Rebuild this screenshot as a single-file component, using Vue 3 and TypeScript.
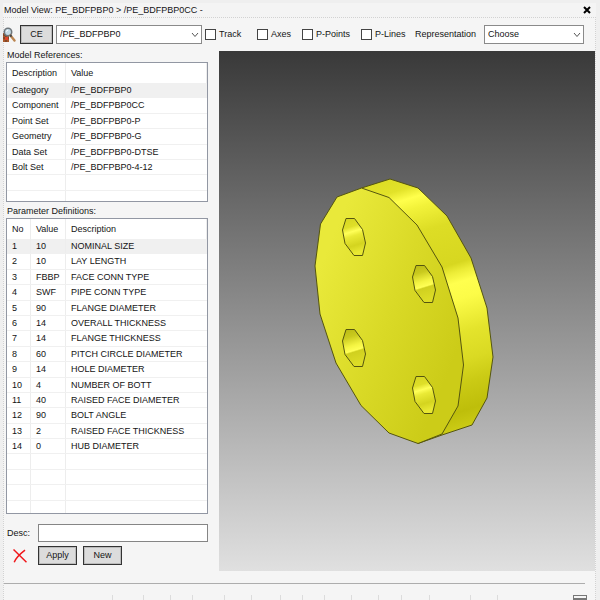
<script setup lang="ts">
import { ref } from 'vue'

interface Reference {
  description: string
  value: string
}

interface Parameter {
  no: string
  value: string
  description: string
}

const references: Reference[] = [
  { description: 'Category', value: '/PE_BDFPBP0' },
  { description: 'Component', value: '/PE_BDFPBP0CC' },
  { description: 'Point Set', value: '/PE_BDFPBP0-P' },
  { description: 'Geometry', value: '/PE_BDFPBP0-G' },
  { description: 'Data Set', value: '/PE_BDFPBP0-DTSE' },
  { description: 'Bolt Set', value: '/PE_BDFPBP0-4-12' },
  { description: '', value: '' },
  { description: '', value: '' },
]

const parameters: Parameter[] = [
  { no: '1', value: '10', description: 'NOMINAL SIZE' },
  { no: '2', value: '10', description: 'LAY LENGTH' },
  { no: '3', value: 'FBBP', description: 'FACE CONN TYPE' },
  { no: '4', value: 'SWF', description: 'PIPE CONN TYPE' },
  { no: '5', value: '90', description: 'FLANGE DIAMETER' },
  { no: '6', value: '14', description: 'OVERALL THICKNESS' },
  { no: '7', value: '14', description: 'FLANGE THICKNESS' },
  { no: '8', value: '60', description: 'PITCH CIRCLE DIAMETER' },
  { no: '9', value: '14', description: 'HOLE DIAMETER' },
  { no: '10', value: '4', description: 'NUMBER OF BOTT' },
  { no: '11', value: '40', description: 'RAISED FACE DIAMETER' },
  { no: '12', value: '90', description: 'BOLT ANGLE' },
  { no: '13', value: '2', description: 'RAISED FACE THICKNESS' },
  { no: '14', value: '0', description: 'HUB DIAMETER' },
  { no: '', value: '', description: '' },
  { no: '', value: '', description: '' },
  { no: '', value: '', description: '' },
  { no: '', value: '', description: '' },
]

const toggles = ref([
  { label: 'Track', on: false },
  { label: 'Axes', on: false },
  { label: 'P-Points', on: false },
  { label: 'P-Lines', on: false },
])

const holes = [
  { x: 0, y: 0, fill: 'url(#bore-high)' },
  { x: 70, y: 47, fill: 'url(#bore-low)' },
  { x: 0, y: 111, fill: 'url(#bore-low)' },
  { x: 70, y: 158, fill: 'url(#bore-high)' },
]

// Relative widths of the footer cells
const cells = [111, 31, 27, 22, 32, 27, 28, 22, 22, 27, 26, 23, 28, 41, 27]

const selectedReference = ref(0)
const selectedParameter = ref(0)
const element = ref('/PE_BDFPBP0')
const representation = ref('Choose')
const description = ref('')
</script>

<template>
  <main class="window">
    <header class="title-bar">
      <h1>Model View: PE_BDFPBP0 &gt; /PE_BDFPBP0CC -</h1>
      <button class="icon-button" type="button" aria-label="Close">
        <svg width="8" height="8" viewBox="0 0 8 8"><path d="M1 1 7 7M7 1 1 7" stroke="#000" stroke-width="2" /></svg>
      </button>
    </header>

    <div class="panel">
      <div class="toolbar">
        <svg class="search-icon" width="13" height="16" viewBox="0 0 13 16">
          <rect x="0" y="6" width="6" height="9" fill="#a9572a" />
          <path d="M0 8h6M0 11h6M3 6v9" stroke="#5d3a28" />
          <rect x="2" y="10" width="3" height="3" fill="#e0442a" />
          <circle cx="5" cy="5" r="3.7" fill="#c5dbe6" stroke="#6f767b" stroke-width="1.6" />
          <path d="M3 4.5 5 3" stroke="#fff" />
          <path d="m7.5 8.5 4 5" stroke="#bb8550" stroke-width="2.4" stroke-linecap="round" />
          <path d="m7.2 8 1.3 1.6" stroke="#45484b" stroke-width="2" />
        </svg>
        <button class="button ce" type="button">CE</button>
        <div class="combo element">
          <select v-model="element" aria-label="Element"><option>/PE_BDFPBP0</option></select>
          <svg width="8" height="6" viewBox="0 0 8 6"><path d="m1 1 3 3.5L7 1" fill="none" stroke="#555" /></svg>
        </div>
        <div class="options">
          <label v-for="toggle in toggles" :key="toggle.label" class="toggle">
            <input v-model="toggle.on" type="checkbox" /><span class="caption">{{ toggle.label }}</span>
          </label>
          <label class="caption" for="representation">Representation</label>
          <div class="combo">
            <select id="representation" v-model="representation"><option>Choose</option></select>
            <svg width="8" height="6" viewBox="0 0 8 6"><path d="m1 1 3 3.5L7 1" fill="none" stroke="#555" /></svg>
          </div>
        </div>
      </div>

      <div class="content">
        <section class="sidebar">
          <h2>Model References:</h2>
          <div class="list references">
            <table>
              <thead>
                <tr><th>Description</th><th>Value</th></tr>
              </thead>
              <tbody>
                <tr
                  v-for="(row, i) in references"
                  :key="i"
                  :class="{ selected: i === selectedReference }"
                  @click="selectedReference = i"
                >
                  <td>{{ row.description }}</td>
                  <td>{{ row.value }}</td>
                </tr>
              </tbody>
            </table>
          </div>

          <h2>Parameter Definitions:</h2>
          <div class="list parameters">
            <table>
              <thead>
                <tr><th>No</th><th>Value</th><th>Description</th></tr>
              </thead>
              <tbody>
                <tr
                  v-for="(row, i) in parameters"
                  :key="i"
                  :class="{ selected: i === selectedParameter }"
                  @click="selectedParameter = i"
                >
                  <td>{{ row.no }}</td>
                  <td>{{ row.value }}</td>
                  <td>{{ row.description }}</td>
                </tr>
              </tbody>
            </table>
          </div>

          <form class="editor" @submit.prevent>
            <label for="desc">Desc:</label>
            <input id="desc" v-model="description" type="text" />
            <button class="icon-button delete" type="button" aria-label="Delete">
              <svg width="14" height="14" viewBox="0 0 14 14">
                <path d="M.5.5 13.5 13.3M12 1.2C7 5 3 9 1.2 13.3" fill="none" stroke="#f0181c" stroke-width="1.5" />
              </svg>
            </button>
            <div class="actions">
              <button class="button" type="submit">Apply</button>
              <button class="button" type="button">New</button>
            </div>
          </form>
        </section>

        <div class="viewport">
          <svg viewBox="219 51 376 520" role="img" aria-label="Flange model">
            <defs>
              <linearGradient id="face" gradientUnits="userSpaceOnUse" x1="315" y1="280" x2="462" y2="340">
                <stop offset="0" stop-color="#e9e93a" />
                <stop offset="0.5" stop-color="#dada27" />
                <stop offset="1" stop-color="#cccc18" />
              </linearGradient>
              <linearGradient id="rim" gradientUnits="userSpaceOnUse" x1="390" y1="179" x2="470" y2="437">
                <stop offset="0" stop-color="#dede25" />
                <stop offset="0.05" stop-color="#e2e229" />
                <stop offset="0.09" stop-color="#ffff4c" />
                <stop offset="0.13" stop-color="#f2f23a" />
                <stop offset="0.22" stop-color="#dddd25" />
                <stop offset="0.37" stop-color="#d7d720" />
                <stop offset="0.4" stop-color="#ecec37" />
                <stop offset="0.44" stop-color="#ffff4e" />
                <stop offset="0.5" stop-color="#fcfc48" />
                <stop offset="0.62" stop-color="#e4e42c" />
                <stop offset="0.72" stop-color="#dada23" />
                <stop offset="0.8" stop-color="#cbcb15" />
                <stop offset="0.9" stop-color="#bebe0a" />
                <stop offset="1" stop-color="#d4d41c" />
              </linearGradient>
              <linearGradient id="bore-high" x1="0" y1="0" x2="0.19" y2="1">
                <stop offset="0" stop-color="#d5d520" />
                <stop offset="0.28" stop-color="#dfdf29" />
                <stop offset="0.42" stop-color="#ffff58" />
                <stop offset="0.54" stop-color="#eaea36" />
                <stop offset="0.8" stop-color="#d4d41f" />
                <stop offset="1" stop-color="#e8e832" />
              </linearGradient>
              <linearGradient id="bore-low" x1="0" y1="0" x2="0.19" y2="1">
                <stop offset="0" stop-color="#b9b914" />
                <stop offset="0.25" stop-color="#caca1e" />
                <stop offset="0.5" stop-color="#f4f442" />
                <stop offset="0.64" stop-color="#ffff55" />
                <stop offset="0.68" stop-color="#d0d01f" />
                <stop offset="1" stop-color="#dcdc26" />
              </linearGradient>
            </defs>
            <g stroke="#55550f" stroke-width="1" stroke-linejoin="round">
              <path
                d="M361.5 188 390 179 418 188 447 216 471 258 487 308 493 357 487 398 472 425 442 435 418 443.5 389 390Z"
                fill="url(#rim)"
              />
              <path
                d="M361.5 188 389 197.5 417 225 442 267 458 318 463.5 365 458 406 442 434 418 443.5 389 433 361 405.5 336 363 320 314 315 266 320.5 224 337 197Z"
                fill="url(#face)"
              />
              <path
                v-for="(hole, i) in holes"
                :key="i"
                d="M346 218.5 354.5 218.5 362.5 229.5 365.5 243 362.5 255.5 354 255.5 345 243.5 342.5 230Z"
                :transform="`translate(${hole.x} ${hole.y})`"
                :fill="hole.fill"
              />
            </g>
          </svg>
        </div>
      </div>

      <hr />

      <footer class="ruler">
        <i v-for="(width, i) in cells" :key="i" :style="{ flexGrow: width }"></i>
        <b></b>
      </footer>
    </div>
  </main>
</template>

<style>
body {
  margin: 0;
  background: #efefef;
}
</style>

<style scoped>
* {
  box-sizing: border-box;
}

.window {
  display: flex;
  flex-direction: column;
  height: 100vh;
  min-height: 600px;
  padding: 3px 4px 0 3px;
  overflow: hidden;
  font-family: 'Liberation Sans', Arial, sans-serif;
  font-size: 9px;
  line-height: 12px;
  color: #141414;
}

h1,
h2 {
  margin: 0;
  font-size: 9px;
  font-weight: 400;
}

.title-bar {
  display: flex;
  flex: none;
  align-items: center;
  justify-content: space-between;
  height: 14px;
  padding: 0 5px 0 1px;
  background: #f4f4f4;
}

.icon-button {
  display: grid;
  place-items: center;
  padding: 0;
  border: 0;
  background: none;
}

.panel {
  display: flex;
  flex: 1;
  flex-direction: column;
  min-height: 0;
  border: 1px dotted #d2d2d2;
  border-bottom: 0;
  background: #f5f5f5;
}

.toolbar {
  display: flex;
  flex: none;
  align-items: center;
  height: 33px;
  padding-right: 11px;
}

.search-icon {
  flex: none;
  width: 13px;
  margin-right: 4px;
  margin-left: -1px;
}

.button {
  min-width: 39px;
  height: 19px;
  padding: 0 0 1px;
  border: 1px solid #333;
  outline: 1px solid #bbb;
  outline-offset: -2px;
  background: #dcdcdc;
  color: inherit;
  font: inherit;
}

.ce {
  width: 33px;
  min-width: 33px;
  margin-right: 3px;
}

.combo {
  display: grid;
  align-items: center;
  height: 19px;
}

.combo select {
  grid-area: 1 / 1;
  width: 100%;
  height: 19px;
  padding: 0 16px 2px 3px;
  border: 1px solid #8a8a8a;
  border-radius: 0;
  appearance: none;
  background: #fff;
  color: inherit;
  font: inherit;
}

.combo svg {
  grid-area: 1 / 1;
  justify-self: end;
  margin-right: 3px;
  pointer-events: none;
}

.element {
  flex: none;
  width: 146px;
  margin-right: 3px;
}

.options {
  display: grid;
  flex: 1;
  grid-template-columns: 52px 45px 59px 54px 69px 1fr;
  align-items: center;
}

.toggle {
  display: flex;
  align-items: center;
  gap: 3px;
  white-space: nowrap;
}

.caption {
  padding-bottom: 2px;
}

.toggle input {
  flex: none;
  width: 11px;
  height: 11px;
  margin: 0;
  border: 1px solid #444;
  appearance: none;
  background: #fff;
}

.toggle input:checked {
  background: #444;
  box-shadow: inset 0 0 0 2px #fff;
}

.content {
  display: flex;
  flex: 1;
  min-height: 0;
}

.sidebar {
  display: flex;
  flex: none;
  flex-direction: column;
  width: 215px;
  padding: 0 11px 0 2px;
}

h2 {
  flex: none;
  height: 11px;
  padding-left: 1px;
  line-height: 8px;
}

.list {
  flex: none;
  overflow: hidden;
  border: 1px solid #9297a3;
  background: #fff;
}

.references {
  height: 140px;
  margin-bottom: 5px;
}

.parameters {
  height: 296px;
}

table,
thead {
  display: block;
}

tbody {
  display: grid;
  grid-auto-rows: 1fr;
}

.references tbody {
  height: 123px;
}

.parameters tbody {
  height: 277px;
}

tr {
  display: grid;
  border-bottom: 1px solid #f0f0f0;
}

.references tr {
  grid-template-columns: 59px 1fr;
}

.parameters tr {
  grid-template-columns: 24px 35px 1fr;
}

th,
td {
  overflow: hidden;
  padding: 1px 0 0 5px;
  border-right: 1px solid #ededed;
  text-align: left;
  font-weight: 400;
  line-height: 13px;
  white-space: nowrap;
}

th {
  padding-top: 0;
  line-height: 20px;
}

thead tr {
  border-bottom: 0;
}

td:last-child {
  border-right: 0;
}

.selected td {
  background: #f0f0f0;
}

.editor {
  display: grid;
  grid-template-columns: 31px 1fr;
  align-items: center;
  row-gap: 4px;
  margin-top: 10px;
  padding-left: 1px;
}

.editor input {
  width: 100%;
  height: 18px;
  padding: 0 3px;
  border: 1px solid #858585;
  border-radius: 0;
  background: #fff;
  font: inherit;
}

.delete {
  width: 26px;
}

.actions {
  display: flex;
  gap: 6px;
}

.viewport {
  flex: 1;
  min-width: 0;
  background: linear-gradient(#393939, #e0e0e0);
}

.viewport svg {
  display: block;
  width: 100%;
  height: 100%;
}

hr {
  flex: none;
  width: calc(100% - 10px);
  height: 1px;
  margin: 12px 0 11px;
  border: 0;
  background: #adadad;
}

.ruler {
  display: flex;
  flex: none;
  height: 5px;
  padding-right: 8px;
}

.ruler i {
  flex-basis: 0;
  border-right: 1px solid #dcdcdc;
}

.ruler b {
  width: 14px;
  margin-left: 75px;
  border: 1px solid #777;
  border-bottom-width: 2px;
}
</style>
